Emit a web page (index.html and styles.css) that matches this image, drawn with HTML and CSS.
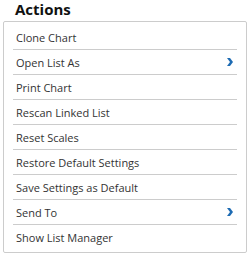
FILE: index.html
```html
<!DOCTYPE html>
<html lang="en">
<head>
    <meta charset="UTF-8">
    <title>Actions</title>
    <link rel="stylesheet" href="styles.css">
</head>
<body>
    <div class="panel">
        <div class="panel-title">Actions</div>
        <ul class="menu">
            <li class="menu-item">Clone Chart</li>
            <li class="menu-item has-sub">Open List As
                <svg class="chevron" viewBox="0 0 6 8"><path d="M0 0 H3 L6 4 L3 8 H0 L3 4 Z"/></svg>
            </li>
            <li class="menu-item">Print Chart</li>
            <li class="menu-item">Rescan Linked List</li>
            <li class="menu-item">Reset Scales</li>
            <li class="menu-item">Restore Default Settings</li>
            <li class="menu-item">Save Settings as Default</li>
            <li class="menu-item has-sub">Send To
                <svg class="chevron" viewBox="0 0 6 8"><path d="M0 0 H3 L6 4 L3 8 H0 L3 4 Z"/></svg>
            </li>
            <li class="menu-item">Show List Manager</li>
        </ul>
    </div>
</body>
</html>
```

FILE: styles.css
```css
body, html {
    margin: 0;
    padding: 0;
    background: #fff;
    color: #333;
    font-family: "Open Sans", sans-serif;
}

.panel {
    width: 244px;
    margin-left: 3px;
}

.panel-title {
    font-size: 15px;
    font-weight: 700;
    color: #111;
    padding-left: 12px;
    height: 23px;
    line-height: 18px;
    margin-top: -2px;
    padding-top: 2px;
    box-sizing: border-box;
}

.menu {
    list-style: none;
    margin: 0;
    padding: 3px 9px;
    border: 1px solid #ccc;
    border-radius: 2px;
}

.menu-item {
    display: flex;
    align-items: center;
    justify-content: space-between;
    height: 24px;
    padding: 0 4px 0 3px;
    font-size: 11px;
    border-bottom: 1px solid #ccc;
}

.menu-item:last-child {
    border-bottom: none;
}

.chevron {
    width: 6px;
    height: 8px;
    fill: #1d6bb3;
}
```
